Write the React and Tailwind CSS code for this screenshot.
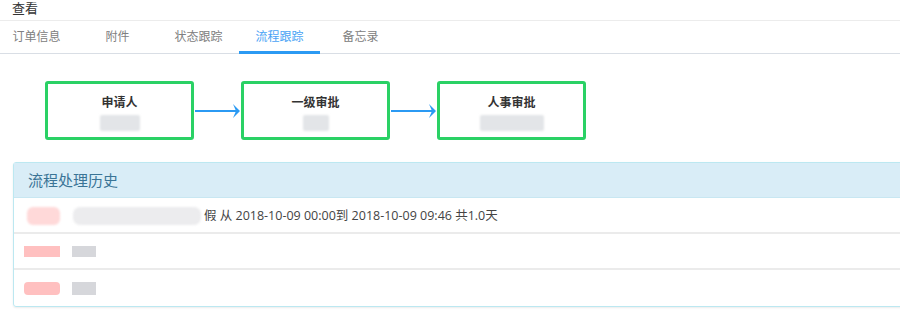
import React from 'react';

const tabs = ['订单信息', '附件', '状态跟踪', '流程跟踪', '备忘录'];

const steps = [
    { title: '申请人', blur: 'w-[40px]' },
    { title: '一级审批', blur: 'w-[26px]' },
    { title: '人事审批', blur: 'w-[64px]' },
];

const Arrow = () => (
    <svg width="47" height="16" viewBox="0 0 47 16" className="shrink-0">
        <line x1="1" y1="8" x2="43" y2="8" stroke="#2b9af3" strokeWidth="2" />
        <path d="M39 1 L46 8 L39 15 L42 8 Z" fill="#2b9af3" />
    </svg>
);

const FlowBox = ({ title, blur }) => (
    <div className="w-[149px] h-[59px] shrink-0 border-[3px] border-[#2ad165] rounded-[3px] bg-white flex flex-col items-center pt-[10px]">
        <p className="text-[12px] font-bold text-[#333] leading-[18px]">{title}</p>
        <div className={`${blur} h-[16px] mt-[3px] rounded-[2px] bg-[#e3e5e8] blur-[1px]`} />
    </div>
);

const App = () => {
    return (
        <div className="w-[900px] h-[314px] bg-white overflow-hidden" style={{ fontFamily: '"Open Sans", "Noto Sans CJK SC", sans-serif' }}>
            <div className="h-[21px] border-b border-[#ececec] pl-[12px]">
                <p className="text-[13px] leading-[17px] text-[#333]">查看</p>
            </div>

            <div className="h-[33px] border-b border-[#d9dee5] flex ml-[-4px]">
                {tabs.map((t, i) => (
                    <div
                        key={t}
                        className={`w-[81px] h-full flex items-center justify-center text-[12px] relative ${i === 3 ? 'text-[#4aa3f5]' : 'text-[#808080]'}`}
                    >
                        {t}
                        {i === 3 && <span className="absolute left-0 right-0 bottom-[-1px] h-[3px] bg-[#2b9af3]" />}
                    </div>
                ))}
            </div>

            <div className="flex items-center pl-[45px] mt-[27px]">
                {steps.map((s, i) => (
                    <React.Fragment key={s.title}>
                        {i > 0 && <Arrow />}
                        <FlowBox {...s} />
                    </React.Fragment>
                ))}
            </div>

            <div className="ml-[13px] mt-[22px] w-[900px] border border-[#bce8f1] rounded-[3px] shadow-[0_1px_2px_rgba(0,0,0,0.08)]">
                <div className="h-[35px] bg-[#d9edf7] border-b border-[#c8e7f2] flex items-center pl-[14px]">
                    <p className="text-[15px] text-[#3a7496]">流程处理历史</p>
                </div>
                <div className="h-[36px] border-b-2 border-[#ebebeb] flex items-center pl-[13px] pt-[2px]">
                    <div className="w-[33px] h-[18px] rounded-[6px] bg-[#ffd9d9] blur-[1px]" />
                    <div className="ml-[13px] w-[128px] h-[18px] rounded-[7px] bg-[#ececee] blur-[1px]" />
                    <span className="ml-[3px] text-[12.5px] text-[#444]">假 从 2018-10-09 00:00到 2018-10-09 09:46 共1.0天</span>
                </div>
                <div className="h-[36px] border-b-2 border-[#ebebeb] flex items-center pl-[10px]">
                    <div className="w-[36px] h-[11px] bg-[#ffc0c0] blur-[0.5px]" />
                    <div className="ml-[12px] w-[24px] h-[11px] bg-[#d6d7db]" />
                </div>
                <div className="h-[36px] flex items-center pl-[10px]">
                    <div className="w-[36px] h-[13px] rounded-[4px] bg-[#ffc0c0] blur-[0.5px]" />
                    <div className="ml-[12px] w-[24px] h-[13px] bg-[#d6d7db]" />
                </div>
            </div>
        </div>
    );
};

export default App;
